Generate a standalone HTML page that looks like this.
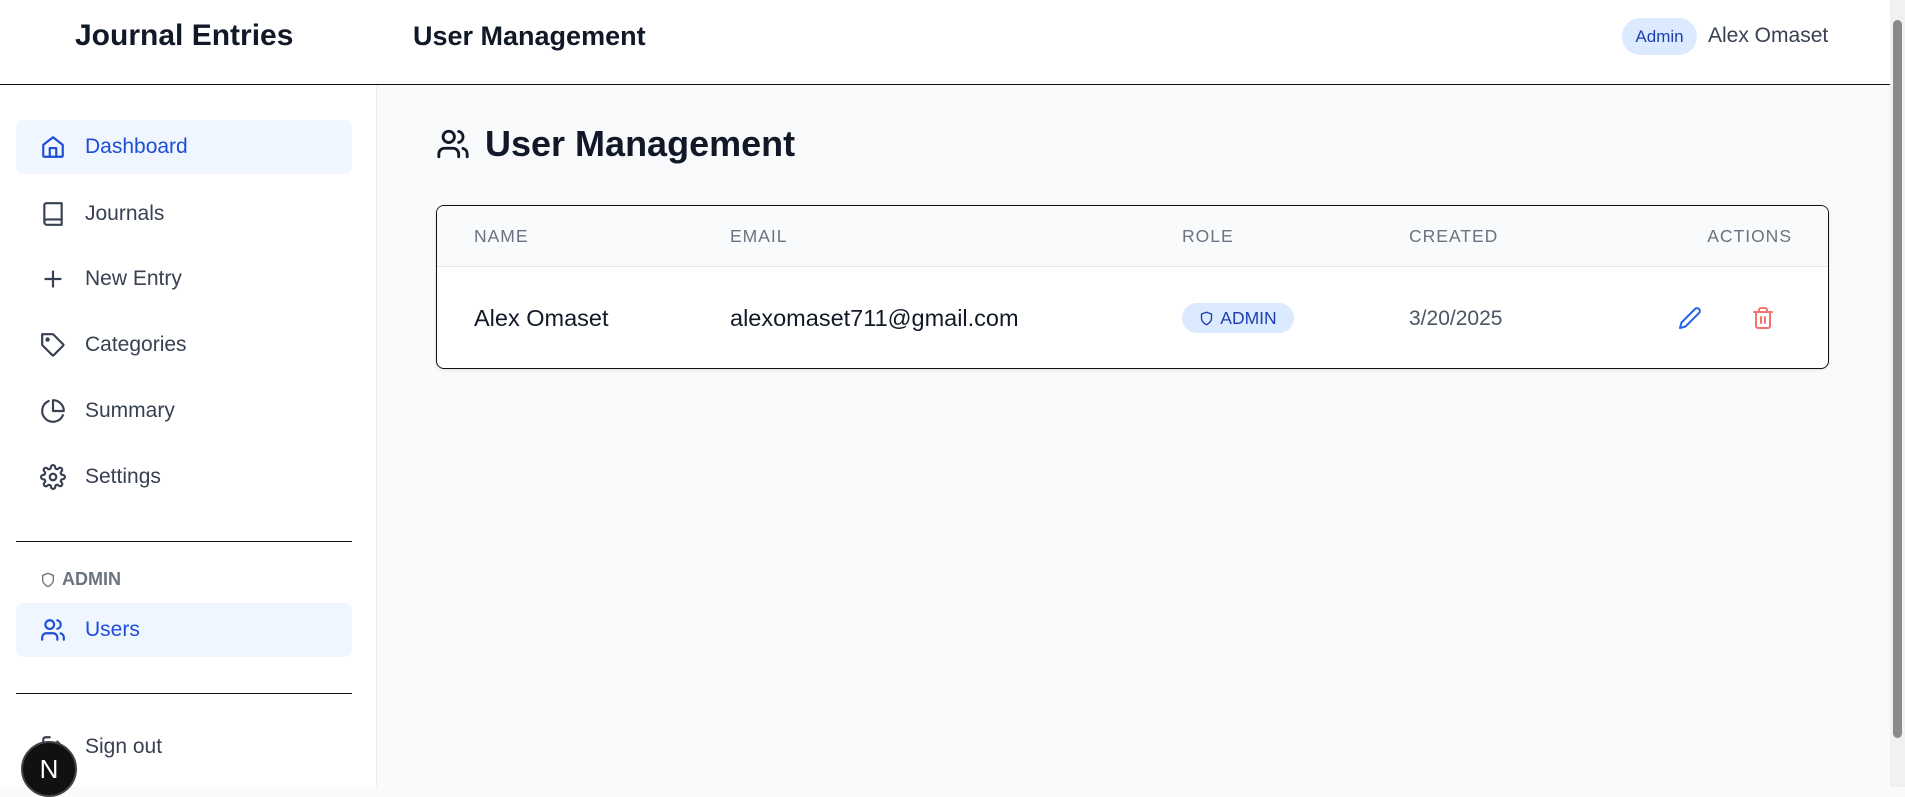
<!DOCTYPE html>
<html><head><meta charset="utf-8"><style>
*{box-sizing:border-box;margin:0;padding:0}
body{width:1905px;height:787px;overflow:hidden;font-family:"Liberation Sans",sans-serif;background:#f9fafb;position:relative;color:#111827}
.hdr{position:absolute;left:0;top:0;width:1890px;height:85px;background:#fff;border-bottom:1.5px solid #111}
.side{position:absolute;left:0;top:85px;width:377px;height:702px;background:#fff;border-right:1px solid #eceef1}
.sb{position:absolute;right:0;top:0;width:15px;height:787px;background:#f1f1f1}
.sb div{position:absolute;left:3px;top:20px;width:9px;height:718px;background:#8a8a8a;border-radius:5px}
.nav{position:absolute;left:16px;width:336px;height:54px;border-radius:8px;display:flex;align-items:center;font-size:21px;color:#374151}
.nav svg{position:absolute;left:24px;width:26px;height:26px;fill:none;stroke:currentColor;stroke-width:2;stroke-linecap:round;stroke-linejoin:round}
.nav span{position:absolute;left:69px}
.act{background:#eff6ff;color:#1d4ed8}
.div{position:absolute;left:16px;width:336px;border-top:1.5px solid #111}
.card{position:absolute;left:436px;top:205px;width:1393px;height:164px;background:#fff;border:1.5px solid #111;border-radius:8px;overflow:hidden;box-shadow:0 1px 3px rgba(0,0,0,.1)}
.th{position:absolute;top:0;left:0;right:0;height:61px;background:#f9fafb;border-bottom:1px solid #e5e7eb}
.th span{position:absolute;top:20px;font-size:17.5px;color:#6b7280;letter-spacing:1px}
.td{position:absolute;top:99px;font-size:23.5px}
</style></head><body>
<div class="hdr">
 <div style="position:absolute;left:75px;top:19px;font-size:30px;font-weight:bold">Journal Entries</div>
 <div style="position:absolute;left:413px;top:21px;font-size:27px;font-weight:bold">User Management</div>
 <div style="position:absolute;left:1622px;top:18px;width:75px;height:37px;border-radius:19px;background:#dbeafe;color:#1e40af;font-size:17px;line-height:37px;text-align:center">Admin</div>
 <div style="position:absolute;left:1708px;top:24px;font-size:21px;color:#374151">Alex Omaset</div>
</div>
<div class="side">
 <div class="nav act" style="top:35px"><svg viewBox="0 0 24 24"><path d="M3 10l9-7 9 7v10a1 1 0 0 1-1 1H4a1 1 0 0 1-1-1z"/><path d="M9 21v-8h6v8"/></svg><span>Dashboard</span></div>
 <div class="nav" style="top:102px"><svg viewBox="0 0 24 24"><path d="M4 19.5V4a2 2 0 0 1 2-2h14v20H6.5A2.5 2.5 0 0 1 4 19.5z"/><path d="M4 19.5A2.5 2.5 0 0 1 6.5 17H20"/></svg><span>Journals</span></div>
 <div class="nav" style="top:167px"><svg viewBox="0 0 24 24"><path d="M12 5v14M5 12h14"/></svg><span>New Entry</span></div>
 <div class="nav" style="top:233px"><svg viewBox="0 0 24 24"><path d="M12 2H2v10l9.3 9.3a1 1 0 0 0 1.4 0l8.6-8.6a1 1 0 0 0 0-1.4z"/><circle cx="7" cy="7" r="1"/></svg><span>Categories</span></div>
 <div class="nav" style="top:299px"><svg viewBox="0 0 24 24"><path d="M21.2 15.9A10 10 0 1 1 8 2.8"/><path d="M22 12A10 10 0 0 0 12 2v10z"/></svg><span>Summary</span></div>
 <div class="nav" style="top:365px"><svg viewBox="0 0 24 24"><circle cx="12" cy="12" r="3"/><path d="M19.4 15a1.7 1.7 0 0 0 .3 1.8l.1.1a2 2 0 1 1-2.8 2.8l-.1-.1a1.7 1.7 0 0 0-1.8-.3 1.7 1.7 0 0 0-1 1.5V21a2 2 0 0 1-4 0v-.1a1.7 1.7 0 0 0-1.100-1.500 1.7 1.7 0 0 0-1.8.3l-.1.1a2 2 0 1 1-2.8-2.8l.1-.1a1.7 1.7 0 0 0 .3-1.8 1.7 1.7 0 0 0-1.5-1H3a2 2 0 0 1 0-4h.1a1.7 1.7 0 0 0 1.5-1.1 1.7 1.7 0 0 0-.3-1.8l-.1-.1a2 2 0 1 1 2.8-2.8l.1.1a1.7 1.7 0 0 0 1.8.3H9a1.7 1.7 0 0 0 1-1.5V3a2 2 0 0 1 4 0v.1a1.7 1.7 0 0 0 1 1.5 1.7 1.7 0 0 0 1.8-.3l.1-.1a2 2 0 1 1 2.8 2.8l-.1.1a1.7 1.7 0 0 0-.3 1.8V9a1.7 1.7 0 0 0 1.5 1H21a2 2 0 0 1 0 4h-.1a1.7 1.7 0 0 0-1.5 1z"/></svg><span>Settings</span></div>
 <div class="div" style="top:456px"></div>
 <div style="position:absolute;left:40px;top:484px;font-size:18px;font-weight:bold;color:#6b7280;display:flex;align-items:center;gap:6px"><svg width="16" height="18" viewBox="0 0 24 24" fill="none" stroke="#6b7280" stroke-width="2"><path d="M12 22s8-4 8-10V5l-8-3-8 3v7c0 6 8 10 8 10z"/></svg>ADMIN</div>
 <div class="nav act" style="top:518px"><svg viewBox="0 0 24 24"><path d="M16 21v-2a4 4 0 0 0-4-4H6a4 4 0 0 0-4 4v2"/><circle cx="9" cy="7" r="4"/><path d="M22 21v-2a4 4 0 0 0-3-3.9M16 3.1a4 4 0 0 1 0 7.8"/></svg><span>Users</span></div>
 <div class="div" style="top:608px"></div>
 <div class="nav" style="top:635px"><svg viewBox="0 0 24 24"><path d="M9 21H5a2 2 0 0 1-2-2V5a2 2 0 0 1 2-2h4M16 17l5-5-5-5M21 12H9"/></svg><span>Sign out</span></div>
</div>
<div style="position:absolute;left:21px;top:741px;width:56px;height:56px;border-radius:50%;background:#111;border:2px solid #444;color:#fff;font-size:26px;line-height:52px;text-align:center">N</div>
<svg style="position:absolute;left:435px;top:127px" width="36" height="34" viewBox="0 0 24 24" fill="none" stroke="#111827" stroke-width="2" stroke-linecap="round" stroke-linejoin="round"><path d="M16 21v-2a4 4 0 0 0-4-4H6a4 4 0 0 0-4 4v2"/><circle cx="9" cy="7" r="4"/><path d="M22 21v-2a4 4 0 0 0-3-3.9M16 3.1a4 4 0 0 1 0 7.8"/></svg>
<div style="position:absolute;left:485px;top:123px;font-size:36px;font-weight:bold">User Management</div>
<div class="card">
 <div class="th"><span style="left:37px">NAME</span><span style="left:293px">EMAIL</span><span style="left:745px">ROLE</span><span style="left:972px">CREATED</span><span style="right:36px">ACTIONS</span></div>
 <div class="td" style="left:37px">Alex Omaset</div>
 <div class="td" style="left:293px">alexomaset711@gmail.com</div>
 <div style="position:absolute;left:745px;top:97px;width:112px;height:30px;border-radius:15px;background:#dbeafe;color:#1e40af;font-size:17.5px;display:flex;align-items:center;justify-content:center;gap:6px"><svg width="15" height="17" viewBox="0 0 24 24" fill="none" stroke="#1e40af" stroke-width="2.2"><path d="M12 22s8-4 8-10V5l-8-3-8 3v7c0 6 8 10 8 10z"/></svg>ADMIN</div>
 <div class="td" style="left:972px;color:#4b5563;font-size:21px;top:101px">3/20/2025</div>
 <svg style="position:absolute;left:1241px;top:100px" width="24" height="24" viewBox="0 0 24 24" fill="none" stroke="#2563eb" stroke-width="2" stroke-linecap="round" stroke-linejoin="round"><path d="M17 3a2.8 2.8 0 1 1 4 4L7.5 20.5 2 22l1.5-5.5z"/></svg>
 <svg style="position:absolute;left:1314px;top:100px" width="24" height="24" viewBox="0 0 24 24" fill="none" stroke="#f87171" stroke-width="2" stroke-linecap="round" stroke-linejoin="round"><path d="M3 6h18M19 6v14a2 2 0 0 1-2 2H7a2 2 0 0 1-2-2V6M8 6V4a2 2 0 0 1 2-2h4a2 2 0 0 1 2 2v2M10 11v6M14 11v6"/></svg>
</div>
<div class="sb"><div></div></div>
</body></html>
